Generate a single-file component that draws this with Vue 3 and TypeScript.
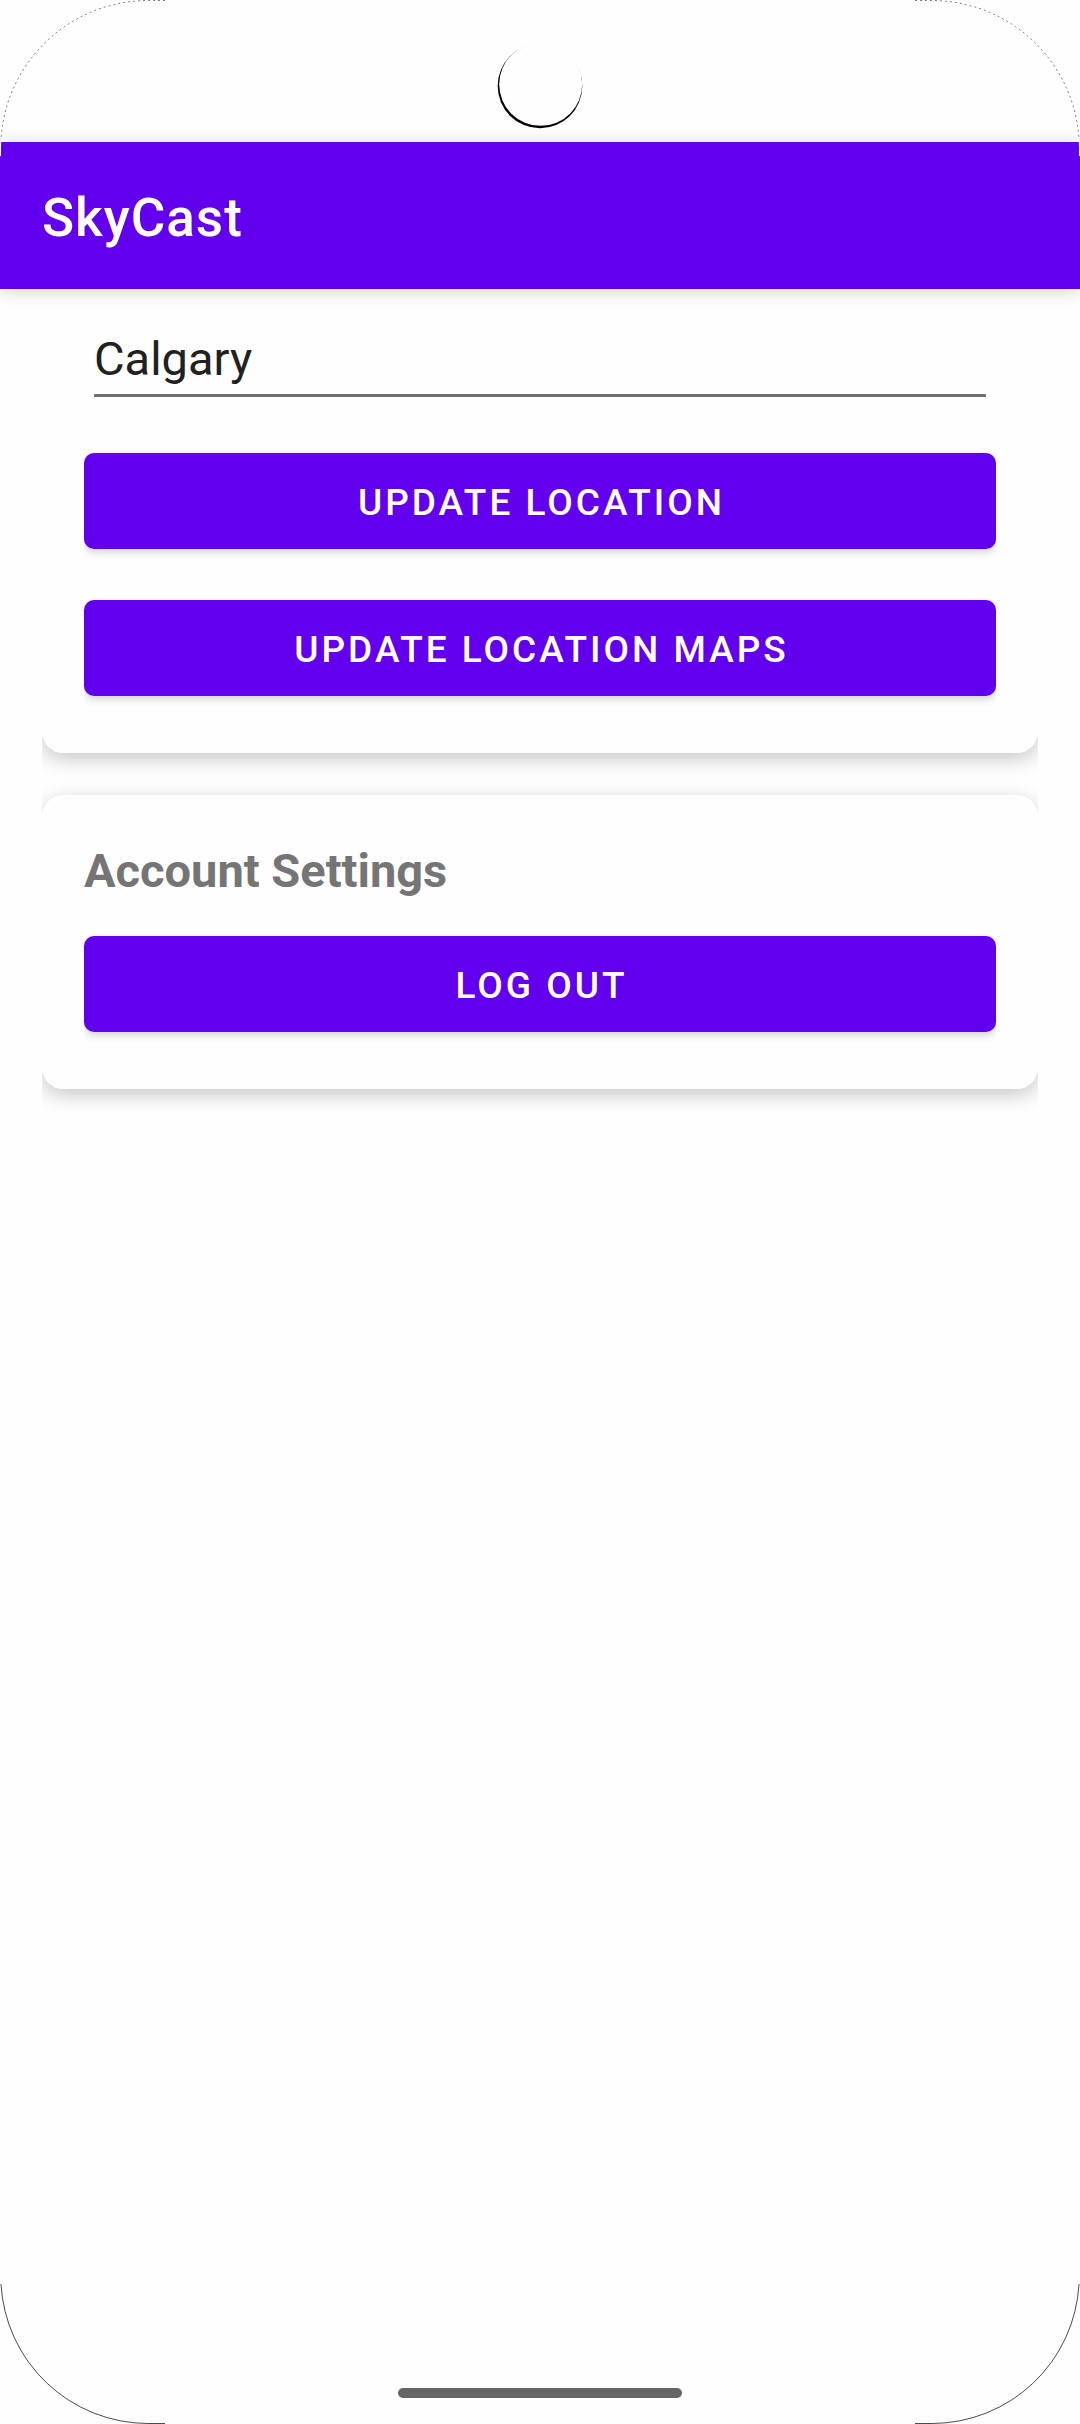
<script setup lang="ts">
import { ref } from 'vue'

const city = ref<string>('Calgary')
const locationActions: string[] = ['Update location', 'Update location maps']
const corners: string[] = ['top-left', 'top-right', 'bottom-left', 'bottom-right']
</script>

<template>
  <div class="screen">
    <div class="status-bar">
      <svg class="camera" width="86" height="86" viewBox="0 0 86 86" aria-hidden="true">
        <circle cx="43" cy="43" r="42.3" fill="#000" />
        <circle cx="43.7" cy="41.3" r="41.5" fill="#fefefe" />
      </svg>
    </div>

    <header class="app-bar">
      <h1 class="title">SkyCast</h1>
    </header>

    <main class="content">
      <section class="card location">
        <input v-model="city" class="city" type="text" aria-label="City" />
        <div class="actions">
          <button v-for="label in locationActions" :key="label" class="button" type="button">
            {{ label }}
          </button>
        </div>
      </section>

      <section class="card account">
        <h2 class="heading">Account Settings</h2>
        <div class="actions">
          <button class="button" type="button">Log out</button>
        </div>
      </section>
    </main>

    <footer class="navigation">
      <div class="handle"></div>
    </footer>

    <svg
      v-for="corner in corners"
      :key="corner"
      class="corner"
      :class="corner"
      width="166"
      height="166"
      viewBox="0 0 166 166"
      aria-hidden="true"
    >
      <path class="outside" d="M0 0H148A147 147 0 0 0 1 148V156H0Z" />
      <path class="edge" d="M165 .5H148A147.500 147.500 0 0 0 1 140" />
    </svg>
  </div>
</template>

<style>
body {
  margin: 0;
  background: #fefefe;
}
</style>

<style scoped>
.screen {
  position: relative;
  display: flex;
  flex-direction: column;
  min-height: 100vh;
  overflow: hidden;
  background: #fefefe;
  font-family: Roboto, "Liberation Sans", sans-serif;
}

.status-bar {
  display: flex;
  justify-content: center;
  align-items: flex-end;
  height: 142px;
  padding-bottom: 13px;
  box-sizing: border-box;
}

.app-bar {
  position: relative;
  z-index: 1;
  display: flex;
  align-items: center;
  height: 147px;
  padding: 4px 42px 0;
  box-sizing: border-box;
  background: #6200ee;
  box-shadow: 0 2px 16px rgba(0, 0, 0, 0.18);
}

.title {
  margin: 0;
  color: #fff;
  font-size: 53px;
  font-weight: 500;
  line-height: 64px;
  letter-spacing: 1px;
}

.content {
  display: flex;
  flex-direction: column;
  gap: 42px;
  margin: 0 42px;
  padding-bottom: 42px;
  overflow-x: clip;
}

.card {
  padding: 44px 42px 57px;
  border-radius: 21px;
  background: #fefefe;
  box-shadow: 0 6px 20px rgba(0, 0, 0, 0.22);
}

.location {
  padding-top: 38px;
  border-top-left-radius: 0;
  border-top-right-radius: 0;
}

.city {
  display: block;
  width: calc(100% - 20px);
  height: 70px;
  margin: 0 10px 56px;
  padding: 0 0 5px;
  box-sizing: border-box;
  border: 0;
  border-bottom: 3px solid #707070;
  outline: 0;
  background: none;
  color: #212121;
  font-family: inherit;
  font-size: 47px;
  line-height: 62px;
}

.actions {
  display: flex;
  flex-direction: column;
  gap: 51px;
  overflow-x: clip;
}

.button {
  height: 96px;
  padding: 4px 42px 0 45px;
  border: 0;
  border-radius: 10px;
  background: #6200ee;
  box-shadow: 0 3px 8px rgba(0, 0, 0, 0.18);
  color: #fff;
  font-family: inherit;
  font-size: 37px;
  font-weight: 500;
  line-height: 48px;
  letter-spacing: 3px;
  text-transform: uppercase;
}

.heading {
  margin: 0 0 33px;
  color: #757575;
  font-size: 47px;
  font-weight: 700;
  line-height: 64px;
}

.navigation {
  display: flex;
  justify-content: center;
  margin-top: auto;
  padding-bottom: 26px;
}

.handle {
  width: 284px;
  height: 10px;
  border-radius: 5px;
  background: #666;
}

.corner {
  position: absolute;
  z-index: 2;
}

.outside {
  fill: #fefefe;
}

.edge {
  fill: none;
  stroke: #000;
  stroke-width: 1;
  stroke-dasharray: 2 3;
  opacity: 0.5;
}

.top-left {
  top: 0;
  left: 0;
}

.top-right {
  top: 0;
  right: 0;
  transform: scaleX(-1);
}

.bottom-left {
  bottom: 0;
  left: 0;
  transform: scaleY(-1);
}

.bottom-right {
  right: 0;
  bottom: 0;
  transform: scale(-1);
}

.bottom-left .edge,
.bottom-right .edge {
  stroke-dasharray: none;
  opacity: 0.7;
}
</style>
